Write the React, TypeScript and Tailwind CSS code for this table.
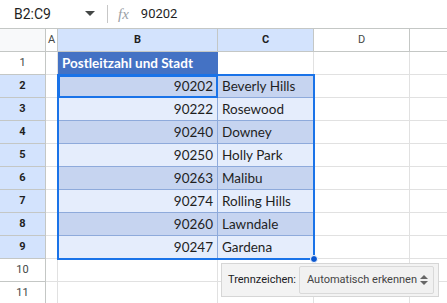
import React from "react";

const rows: [string, string][] = [
  ["90202", "Beverly Hills"],
  ["90222", "Rosewood"],
  ["90240", "Downey"],
  ["90250", "Holly Park"],
  ["90263", "Malibu"],
  ["90274", "Rolling Hills"],
  ["90260", "Lawndale"],
  ["90247", "Gardena"],
];

const cellFont = { fontFamily: "Lato, 'Open Sans', sans-serif" };

function RowHeader({ n, sel }: { n: number; sel: boolean }) {
  return (
    <div
      className={
        "h-[23px] border-r border-b border-[#c4c7c5] flex items-center justify-center text-[11px] " +
        (sel ? "bg-[#d3e3fd] font-bold text-[#1f1f1f]" : "bg-white text-[#444746]")
      }
      style={{ fontFamily: "Roboto, sans-serif" }}
    >
      {n}
    </div>
  );
}

export default function App() {
  return (
    <div className="w-[447px] h-[303px] bg-white overflow-hidden relative" style={{ fontFamily: "Roboto, sans-serif" }}>
      {/* toolbar */}
      <div className="h-[28px] flex items-center text-[#1f1f1f]">
        <div className="w-[80px] pl-[14px] text-[14px]">B2:C9</div>
        <svg width="10" height="6" viewBox="0 0 10 6" className="ml-[5px]">
          <path d="M0 0 L10 0 L5 5 Z" fill="#444746" />
        </svg>
        <div className="ml-[12px] w-px h-[18px] bg-[#c7c7c7]" />
        <div className="ml-[10px] text-[15px] italic text-[#9aa0a6]" style={{ fontFamily: "'Liberation Serif', serif" }}>
          fx
        </div>
        <div className="ml-[12px] text-[13px]">90202</div>
      </div>
      {/* grid */}
      <div className="relative">
        <div className="grid grid-cols-[46px_12px_160px_96px_96px_1fr] border-t border-[#c4c7c5]">
          {/* header row */}
          <div className="h-[23px] bg-[#f8f9fa] border-r border-b border-[#c4c7c5]" />
          <div className="h-[23px] bg-white border-r border-b border-[#c4c7c5] flex items-center justify-center text-[11px] text-[#444746]">A</div>
          <div className="h-[23px] bg-[#d3e3fd] border-r border-b border-[#c4c7c5] flex items-center justify-center text-[11px] font-bold text-[#1f1f1f]">B</div>
          <div className="h-[23px] bg-[#d3e3fd] border-r border-b border-[#c4c7c5] flex items-center justify-center text-[11px] font-bold text-[#1f1f1f]">C</div>
          <div className="h-[23px] bg-white border-r border-b border-[#c4c7c5] flex items-center justify-center text-[11px] text-[#444746]">D</div>
          <div className="h-[23px] bg-white border-b border-[#c4c7c5]" />

          {/* row 1 */}
          <RowHeader n={1} sel={false} />
          <div className="h-[23px] border-r border-b border-[#e1e1e1]" />
          <div
            className="h-[23px] bg-[#4472c4] border-r border-b border-[#4472c4] text-white font-bold text-[13.5px] flex items-center pl-[4px] pt-[1px]"
            style={cellFont}
          >
            Postleitzahl und Stadt
          </div>
          <div className="h-[23px] border-r border-b border-[#e1e1e1]" />
          <div className="h-[23px] border-r border-b border-[#e1e1e1]" />
          <div className="h-[23px] border-b border-[#e1e1e1]" />

          {rows.map(([zip, city], i) => {
            const bg = i % 2 === 0 ? "bg-[#c6d4f0]" : "bg-[#e5edfc]";
            return (
              <React.Fragment key={zip}>
                <RowHeader n={i + 2} sel={true} />
                <div className="h-[23px] border-r border-b border-[#e1e1e1]" />
                <div
                  className={"h-[23px] border-r border-b border-[#8eaadb] text-[13.5px] text-[#1f1f1f] flex items-center justify-end pr-[4px] pt-[1px] " + bg}
                  style={cellFont}
                >
                  {zip}
                </div>
                <div
                  className={"h-[23px] border-r border-b border-[#8eaadb] text-[13.5px] text-[#1f1f1f] flex items-center pl-[4px] pt-[1px] " + bg}
                  style={cellFont}
                >
                  {city}
                </div>
                <div className="h-[23px] border-r border-b border-[#e1e1e1]" />
                <div className="h-[23px] border-b border-[#e1e1e1]" />
              </React.Fragment>
            );
          })}

          {[10, 11].map((n) => (
            <React.Fragment key={n}>
              <RowHeader n={n} sel={false} />
              <div className="h-[23px] border-r border-b border-[#e1e1e1]" />
              <div className="h-[23px] border-r border-b border-[#e1e1e1]" />
              <div className="h-[23px] border-r border-b border-[#e1e1e1]" />
              <div className="h-[23px] border-r border-b border-[#e1e1e1]" />
              <div className="h-[23px] border-b border-[#e1e1e1]" />
            </React.Fragment>
          ))}
        </div>

        {/* selection */}
        <div className="absolute left-[57px] top-[46px] w-[258px] h-[186px] border-2 border-[#1a73e8] pointer-events-none" />
        {/* anchor cell */}
        <div className="absolute left-[58px] top-[47px] w-[160px] h-[23px] border-2 border-[#1a73e8] pointer-events-none" />
        {/* fill handle */}
        <div className="absolute left-[310px] top-[227px] w-[8px] h-[8px] rounded-full bg-[#0b57d0] border border-white" />

        {/* paste popup */}
        <div className="absolute left-[221px] top-[235px] w-[218px] h-[34px] bg-[#f3f3f3] border border-[#d6d6d6] flex items-center">
          <div className="w-[77px] pl-[6px] text-[11px] text-[#202124] whitespace-nowrap" style={{ fontFamily: "Roboto, sans-serif" }}>
            Trennzeichen:
          </div>
          <div className="w-[135px] h-[28px] border border-[#d9d9d9] rounded-[2px] bg-[#f1f1f1] flex items-center pl-[7px] pr-[5px] whitespace-nowrap">
            <span className="text-[11px] text-[#444]" style={{ fontFamily: "Roboto, sans-serif" }}>
              Automatisch erkennen
            </span>
            <svg width="8" height="12" viewBox="0 0 8 12" className="ml-auto shrink-0">
              <path d="M0 5 L4 1 L8 5 Z" fill="#666" />
              <path d="M0 7 L4 11 L8 7 Z" fill="#666" />
            </svg>
          </div>
        </div>
      </div>
    </div>
  );
}
